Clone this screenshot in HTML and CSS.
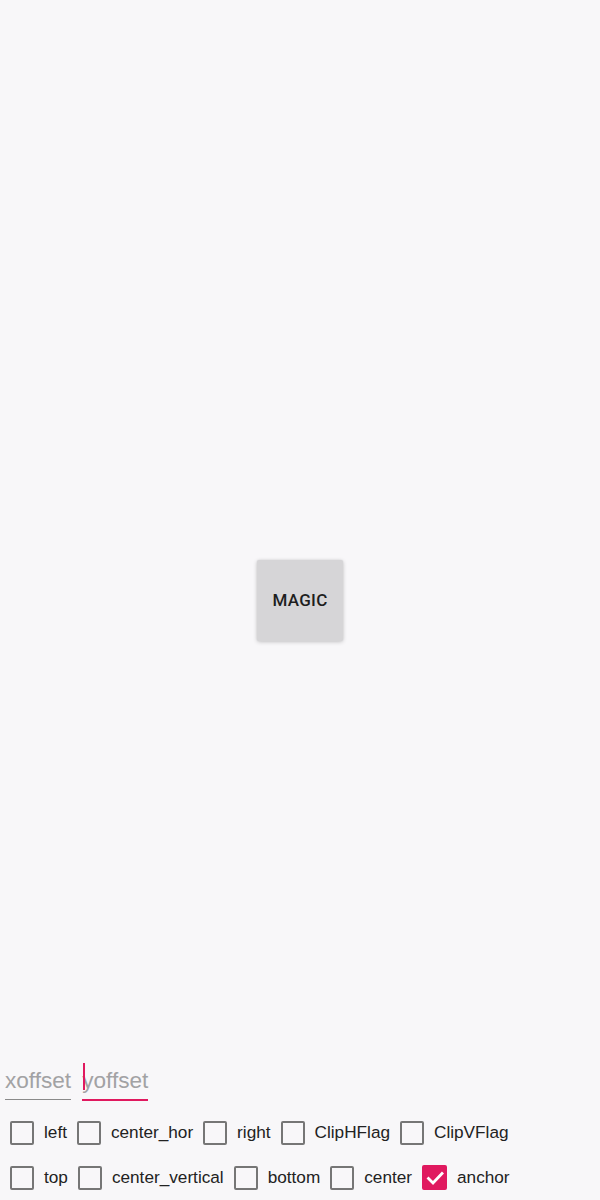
FILE: index.html
```html
<!DOCTYPE html>
<html>
<head>
<meta charset="utf-8">
<link rel="stylesheet" href="styles.css">
</head>
<body>
<div class="screen">
  <main class="stage">
    <button class="magic">MAGIC</button>
  </main>
  <section class="controls">
    <div class="fields">
      <div class="field">xoffset</div>
      <div class="field focused"><span class="cursor"></span>yoffset</div>
    </div>
    <div class="row">
      <label class="opt"><span class="box"></span><span class="lbl">left</span></label>
      <label class="opt"><span class="box"></span><span class="lbl">center_hor</span></label>
      <label class="opt"><span class="box"></span><span class="lbl">right</span></label>
      <label class="opt"><span class="box"></span><span class="lbl">ClipHFlag</span></label>
      <label class="opt"><span class="box"></span><span class="lbl">ClipVFlag</span></label>
    </div>
    <div class="row">
      <label class="opt"><span class="box"></span><span class="lbl">top</span></label>
      <label class="opt"><span class="box"></span><span class="lbl">center_vertical</span></label>
      <label class="opt"><span class="box"></span><span class="lbl">bottom</span></label>
      <label class="opt"><span class="box"></span><span class="lbl">center</span></label>
      <label class="opt"><span class="box checked"><svg viewBox="0 0 24 24" width="24" height="24"><path d="M5.5 12.5 L10 17 L19 7.5" fill="none" stroke="#fff" stroke-width="2.8" stroke-linecap="square"/></svg></span><span class="lbl">anchor</span></label>
    </div>
  </section>
</div>
</body>
</html>
```
FILE: styles.css
```css
html, body {
  margin: 0;
  padding: 0;
}
body {
  background: #f8f7f9;
  font-family: "Liberation Sans", Arial, sans-serif;
}
.screen {
  width: 600px;
  height: 1200px;
  display: flex;
  flex-direction: column;
  overflow: hidden;
}
.stage {
  flex: 1;
  display: flex;
  align-items: center;
  justify-content: center;
  padding-top: 138px;
}
.magic {
  width: 86px;
  height: 81px;
  border: none;
  border-radius: 2px;
  background: #d6d5d7;
  box-shadow: 0 1px 4px rgba(0,0,0,0.2), 0 0 2px rgba(0,0,0,0.08);
  font-family: Roboto, "Liberation Sans", sans-serif;
  font-weight: 500;
  font-size: 17px;
  letter-spacing: 0.3px;
  color: #1e1e1e;
  padding: 0;
}
.controls {
  display: flex;
  flex-direction: column;
}
.fields {
  display: flex;
  gap: 11px;
  padding-left: 5px;
  height: 44px;
  margin-bottom: 4px;
}
.field {
  position: relative;
  font-size: 22.6px;
  line-height: 26px;
  color: #a2a2a4;
  padding-top: 6px;
  padding-bottom: 5px;
  border-bottom: 1.5px solid #8a8a8a;
  align-self: flex-start;
}
.field.focused {
  border-bottom: 2px solid #e0195f;
}
.cursor {
  position: absolute;
  left: 1px;
  top: 1px;
  width: 2px;
  height: 27px;
  background: #e0195f;
}
.row {
  display: flex;
  align-items: center;
  height: 45px;
  padding-left: 10px;
}
.opt {
  display: flex;
  align-items: center;
  margin-right: 10px;
}
.box {
  width: 24px;
  height: 24px;
  box-sizing: border-box;
  border: 2.5px solid #767676;
  border-radius: 2px;
  margin-right: 10px;
  display: flex;
  align-items: center;
  justify-content: center;
}
.box.checked {
  width: 25px;
  height: 25px;
  background: #e0195f;
  border-color: #e0195f;
}
.box.checked svg {
  flex: none;
}
.lbl {
  font-size: 17.2px;
  color: #222;
}
```
